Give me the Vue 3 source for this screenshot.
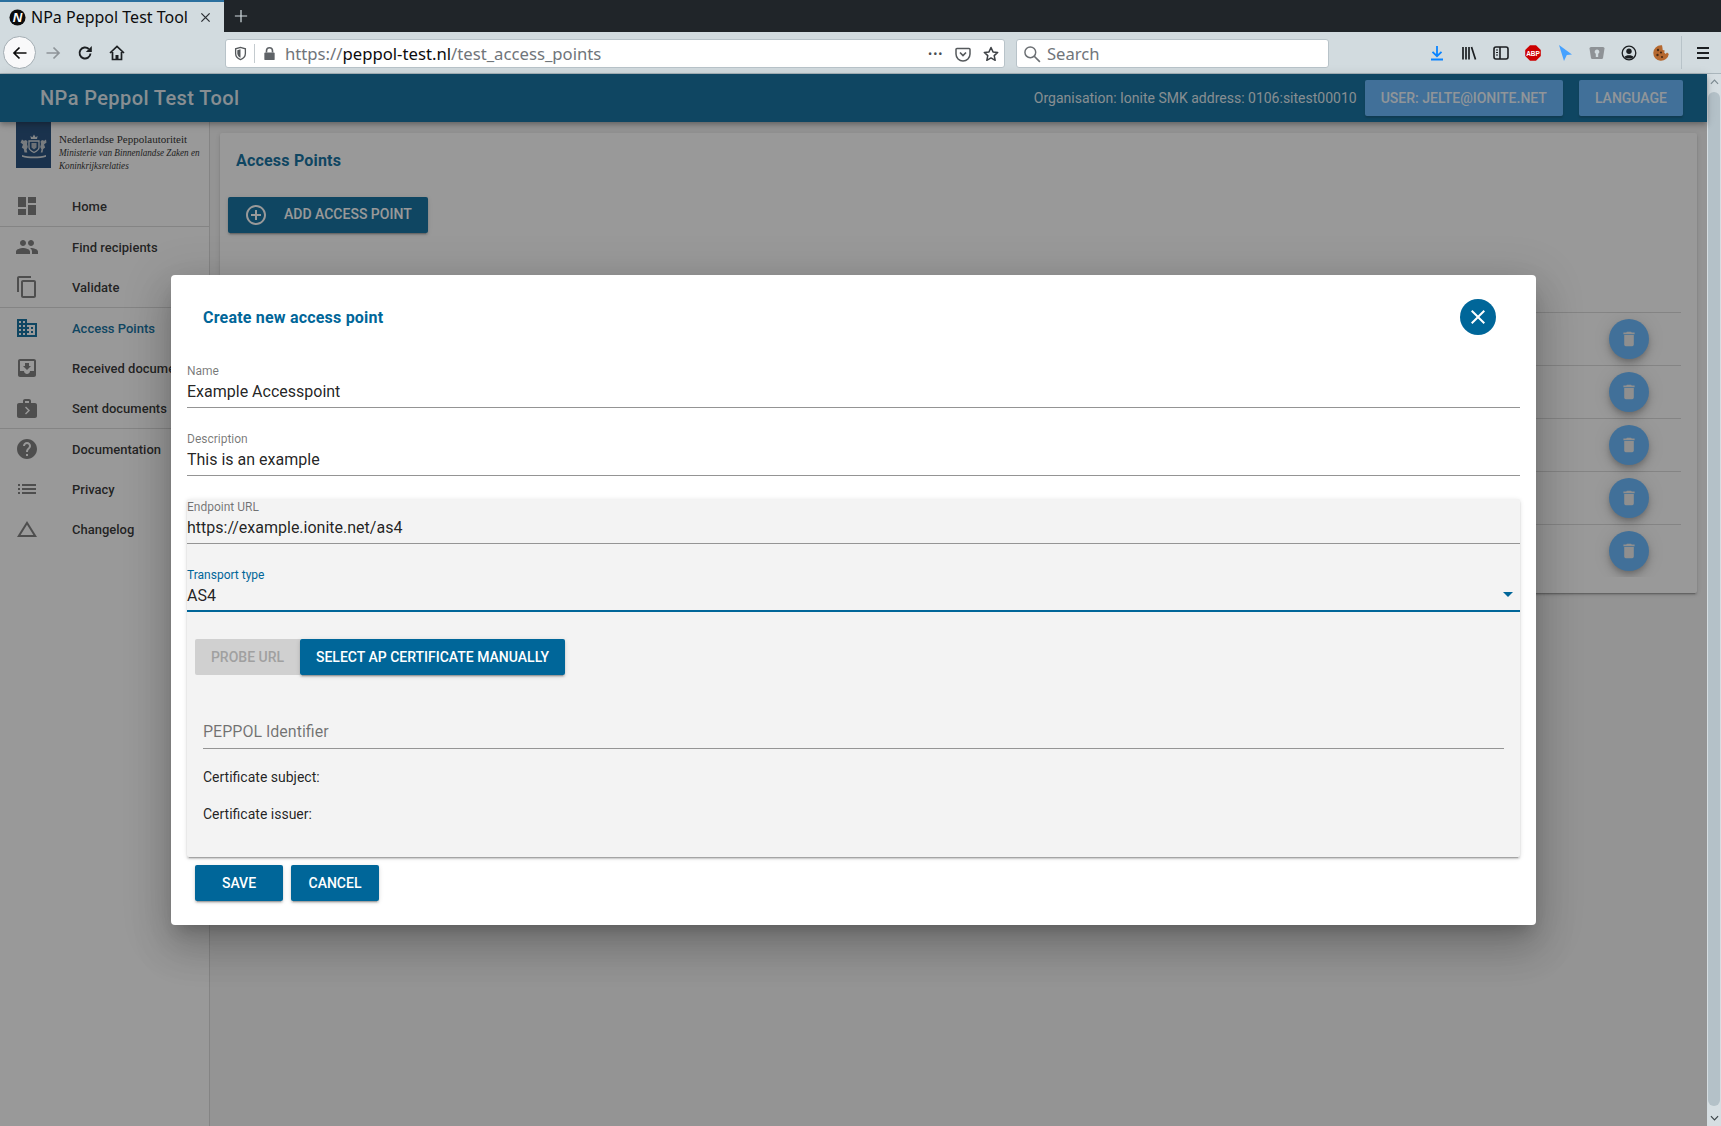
<script setup>
const P = {
  dashboard: 'M3 13h8V3H3v10zm0 8h8v-6H3v6zm10 0h8V11h-8v10zm0-18v6h8V3h-8z',
  people: 'M16 11c1.66 0 2.99-1.34 2.99-3S17.66 5 16 5c-1.66 0-3 1.34-3 3s1.34 3 3 3zm-8 0c1.66 0 2.99-1.34 2.99-3S9.66 5 8 5C6.34 5 5 6.34 5 8s1.34 3 3 3zm0 2c-2.33 0-7 1.17-7 3.5V19h14v-2.5c0-2.33-4.67-3.5-7-3.5zm8 0c-.29 0-.62.02-.97.05 1.16.84 1.97 1.97 1.97 3.45V19h6v-2.5c0-2.33-4.67-3.5-7-3.5z',
  copy: 'M16 1H4c-1.1 0-2 .9-2 2v14h2V3h12V1zm3 4H8c-1.1 0-2 .9-2 2v14c0 1.1.9 2 2 2h11c1.1 0 2-.9 2-2V7c0-1.1-.9-2-2-2zm0 16H8V7h11v14z',
  domain: 'M12 7V3H2v18h20V7H12zM6 19H4v-2h2v2zm0-4H4v-2h2v2zm0-4H4V9h2v2zm0-4H4V5h2v2zm4 12H8v-2h2v2zm0-4H8v-2h2v2zm0-4H8V9h2v2zm0-4H8V5h2v2zm10 12h-8v-2h2v-2h-2v-2h2v-2h-2V9h8v10zm-2-8h-2v2h2v-2zm0 4h-2v2h2v-2z',
  inbox: 'M19 3H4.99c-1.11 0-1.98.89-1.98 2L3 19c0 1.1.88 2 1.99 2H19c1.1 0 2-.9 2-2V5c0-1.11-.9-2-2-2zm0 12h-4c0 1.66-1.35 3-3 3s-3-1.34-3-3H4.99V5H19v10zm-3-5h-2V7h-4v3H8l4 4 4-4z',
  nextWeek: 'M20 7h-4V5c0-.55-.22-1.05-.59-1.41C15.05 3.22 14.55 3 14 3h-4c-1.1 0-2 .9-2 2v2H4c-1.1 0-2 .9-2 2v11c0 1.1.9 2 2 2h16c1.1 0 2-.9 2-2V9c0-1.1-.9-2-2-2zM10 5h4v2h-4V5zm1 13.5l-1-1 3-3-3-3 1-1 4 4-4 4z',
  help: 'M12 2C6.48 2 2 6.48 2 12s4.48 10 10 10 10-4.48 10-10S17.52 2 12 2zm1 17h-2v-2h2v2zm2.07-7.75l-.9.92C13.45 12.9 13 13.5 13 15h-2v-.5c0-1.1.45-2.1 1.17-2.83l1.24-1.26c.37-.36.59-.86.59-1.41 0-1.1-.9-2-2-2s-2 .9-2 2H8c0-2.21 1.79-4 4-4s4 1.79 4 4c0 .88-.36 1.68-.93 2.25z',
  list: 'M3 13h2v-2H3v2zm0 4h2v-2H3v2zm0-8h2V7H3v2zm4 4h14v-2H7v2zm0 4h14v-2H7v2zM7 7v2h14V7H7z',
  change: 'M12 7.77L18.39 18H5.61L12 7.77M12 4L2 20h20L12 4z',
  del: 'M6 19c0 1.1.9 2 2 2h8c1.1 0 2-.9 2-2V7H6v12zM19 4h-3.5l-1-1h-5l-1 1H5v2h14V4z',
  close: 'M19 6.41L17.59 5 12 10.59 6.41 5 5 6.41 10.59 12 5 17.59 6.41 19 12 13.41 17.59 19 19 17.59 13.41 12z',
  add: 'M13 7h-2v4H7v2h4v4h2v-4h4v-2h-4V7zm-1-5C6.48 2 2 6.48 2 12s4.48 10 10 10 10-4.48 10-10S17.52 2 12 2zm0 18c-4.41 0-8-3.59-8-8s3.59-8 8-8 8 3.59 8 8-3.59 8-8 8z',
}
const groups = [
  [{ label: 'Home', icon: P.dashboard }],
  [{ label: 'Find recipients', icon: P.people }, { label: 'Validate', icon: P.copy }],
  [{ label: 'Access Points', icon: P.domain, active: true }, { label: 'Received documents', icon: P.inbox }, { label: 'Sent documents', icon: P.nextWeek }],
  [{ label: 'Documentation', icon: P.help }, { label: 'Privacy', icon: P.list }, { label: 'Changelog', icon: P.change }],
]
const rows = [1, 2, 3, 4, 5]
</script>

<template>
  <div class="root">
    <div class="tabbar">
      <div class="tab">
        <svg class="favicon" viewBox="0 0 18 18"><circle cx="9" cy="9" r="8.5" fill="#0c0c0d"/><text x="9" y="14" text-anchor="middle" class="favtext">N</text></svg>
        <span class="tabtitle">NPa Peppol Test Tool</span>
        <svg class="tabclose" viewBox="0 0 12 12"><path d="M1.5 1.5l9 9M10.5 1.5l-9 9" stroke="#2a2e32" stroke-width="1.4" fill="none"/></svg>
      </div>
      <svg class="newtab" viewBox="0 0 16 16"><path d="M8 1v14M1 8h14" stroke="#d2dbdf" stroke-width="1.4" fill="none"/></svg>
    </div>

    <div class="toolbar">
      <div class="backbtn">
        <svg class="ff" viewBox="0 0 16 16"><path d="M14.5 8H2.5M7.5 2.5L2 8l5.5 5.5" stroke="#0c0c0d" stroke-width="1.7" fill="none"/></svg>
      </div>
      <svg class="ff forward" viewBox="0 0 16 16"><path d="M1.5 8h12M8.5 2.5L14 8l-5.5 5.5" stroke="#8e9499" stroke-width="1.7" fill="none"/></svg>
      <svg class="ff reload" viewBox="0 0 16 16"><path d="M13.5 8.500A5.500 5.500 0 1 1 11.800 4" stroke="#1c1f22" stroke-width="1.9" fill="none"/><path d="M14.800 1v6h-6z" fill="#1c1f22"/></svg>
      <svg class="ff home" viewBox="0 0 16 16"><path d="M1 8l7-6.500L15 8M3.500 7v7.500h9V7" stroke="#1c1f22" stroke-width="1.7" fill="none"/><path d="M6.500 10h3v4.500h-3z" fill="#1c1f22"/></svg>

      <div class="urlbar">
        <svg class="shield" viewBox="0 0 16 16"><path d="M8 1.500L2.800 3v5c0 3.300 2.400 5.500 5.200 6.500 2.800-1 5.200-3.200 5.200-6.500V3z" stroke="#55595c" stroke-width="1.4" fill="none"/><path d="M8 3.500v9C6 11.600 4.600 10 4.600 8V4.400z" fill="#55595c"/></svg>
        <span class="urlsep"></span>
        <svg class="lock" viewBox="0 0 16 16"><path d="M4.800 7V5a3.200 3.200 0 0 1 6.400 0v2" stroke="#5f6367" stroke-width="1.7" fill="none"/><rect x="2.500" y="7" width="11" height="8" rx="1" fill="#5f6367"/></svg>
        <span class="urltext"><span class="dim">https://</span><span class="host">peppol-test.nl</span><span class="dim">/test_access_points</span></span>
        <span class="dots">•••</span>
        <svg class="ff pocket" viewBox="0 0 16 16"><path d="M2 2.500h12a1 1 0 0 1 1 1V8a7 7 0 0 1-14 0V3.500a1 1 0 0 1 1-1z" stroke="#55595c" stroke-width="1.5" fill="none"/><path d="M5 6.500l3 3 3-3" stroke="#55595c" stroke-width="1.7" fill="none"/></svg>
        <svg class="ff star" viewBox="0 0 16 16"><path d="M8 1.500l2 4.400 4.700.5-3.500 3.200 1 4.700L8 11.900l-4.200 2.400 1-4.700L1.300 6.400 6 5.900z" stroke="#3d4145" stroke-width="1.5" fill="none" stroke-linejoin="round"/></svg>
      </div>

      <div class="searchbar">
        <svg class="mag" viewBox="0 0 16 16"><circle cx="6.500" cy="6.500" r="4.800" stroke="#6b6f73" stroke-width="1.3" fill="none"/><path d="M10 10l5 5" stroke="#6b6f73" stroke-width="1.5"/></svg>
        <span class="searchtext">Search</span>
      </div>

      <div class="tools">
        <svg class="ff tool" viewBox="0 0 16 16"><path d="M8 1v10M3.500 6.800L8 11.200l4.500-4.400M2 14.500h12" stroke="#0a84ff" stroke-width="1.8" fill="none"/></svg>
        <svg class="ff tool" viewBox="0 0 16 16"><path d="M2 2v12.500M5 2v12.500M8 2v12.500M10.500 2l4 12.500" stroke="#1c1f22" stroke-width="1.7" fill="none"/></svg>
        <svg class="ff tool" viewBox="0 0 16 16"><rect x="1" y="2" width="14" height="12" rx="2" stroke="#1c1f22" stroke-width="1.6" fill="none"/><path d="M7 2v12" stroke="#1c1f22" stroke-width="1.6"/><path d="M3 5h2M3 7.500h2M3 10h2" stroke="#1c1f22" stroke-width="1"/></svg>
        <svg class="ff tool" viewBox="0 0 16 16"><path d="M5 .2h6L15.800 5v6L11 15.800H5L.2 11V5z" fill="#cc0000"/><text x="8" y="10.700" text-anchor="middle" class="abp">ABP</text></svg>
        <svg class="ff tool" viewBox="0 0 16 16"><path d="M2 0L15 9.500 9.800 10 7 16z" fill="#45a1ff"/></svg>
        <svg class="ff tool" viewBox="0 0 16 16"><path d="M.5 3.500C.5 2.500 1.500 2 2.500 2h11c1 0 2 .5 2 1.500L14 13c-.2.800-.8 1-1.500 1h-9c-.7 0-1.300-.2-1.500-1z" fill="#8e9296"/><path d="M8 4.500a2.300 2.300 0 0 0-1.200 4.300V12h2.400V8.800A2.300 2.300 0 0 0 8 4.500z" fill="#d2dbdf"/></svg>
        <svg class="ff tool" viewBox="0 0 16 16"><circle cx="8" cy="8" r="6.800" stroke="#1c1f22" stroke-width="1.3" fill="none"/><circle cx="8" cy="6.300" r="2.700" fill="#1c1f22"/><path d="M3.500 12c1-2.300 8-2.300 9 0-2 2-7 2-9 0z" fill="#1c1f22"/></svg>
        <svg class="ff tool" viewBox="0 0 16 16"><path d="M8 .2a7.800 7.800 0 1 0 7.800 8.800l-1.800-1.500-1.300 1.500-1.500-1.500.5-2-2-.5-.2-2L9 .3z" fill="#b5682f"/><circle cx="5" cy="5" r="1.200" fill="#4a2a14"/><circle cx="8" cy="7.500" r="1.100" fill="#4a2a14"/><circle cx="4.500" cy="10" r="1.200" fill="#4a2a14"/><circle cx="9" cy="12" r="1.100" fill="#4a2a14"/></svg>
        <span class="toolsep"></span>
        <svg class="ff burger" viewBox="0 0 16 16"><path d="M2 3h12M2 8h12M2 13h12" stroke="#1c1f22" stroke-width="1.8"/></svg>
      </div>
    </div>

    <div class="viewport">
      <div class="page">
        <header class="appbar">
          <div class="apptitle">NPa Peppol Test Tool</div>
          <div class="apporg">Organisation: Ionite SMK address: 0106:sitest00010</div>
          <button class="lightbtn userbtn">USER: JELTE@IONITE.NET</button>
          <button class="lightbtn">LANGUAGE</button>
        </header>

        <div class="body">
          <aside class="sidebar">
            <div class="brand">
              <div class="crest">
                <svg viewBox="0 0 32 28" class="crestsvg">
                  <path d="M13 7l-.6-3 2 1.200L16 2.500l1.600 2.700 2-1.200L19 7z" fill="#d5dade"/>
                  <path d="M11 9h10v6.500c0 2.500-3 4-5 5-2-1-5-2.500-5-5z" fill="none" stroke="#d5dade" stroke-width="1.300"/>
                  <path d="M13.500 11h5v4.500l-2.500 2-2.500-2z" fill="#aeb6be"/>
                  <path d="M4 7.500l1.800 1.200L8 8l1.500 1.500L9 12l.8 3-1.300 2.500.8 3H6.500L5.800 17 3.800 15.500 5 12.500 2.500 10.500z" fill="#c3c9cf"/>
                  <path d="M28 7.500l-1.800 1.200L24 8l-1.500 1.500L23 12l-.8 3 1.300 2.500-.8 3h1.800l.7-3.500 2-1.500-1.200-3 2.500-2z" fill="#c3c9cf"/>
                  <path d="M4 23c6 2 18 2 24 0v1.800c-6 2-18 2-24 0z" fill="#d5dade"/>
                </svg>
              </div>
              <div class="brandtext">
                <div class="brandname">Nederlandse Peppolautoriteit</div>
                <div class="brandsub first">Ministerie van Binnenlandse Zaken en</div>
                <div class="brandsub">Koninkrijksrelaties</div>
              </div>
            </div>
            <nav class="nav">
              <div v-for="(g, gi) in groups" :key="gi" class="navgroup">
                <div v-for="item in g" :key="item.label" class="navitem" :class="{ active: item.active }">
                  <svg class="navicon" viewBox="0 0 24 24"><path :d="item.icon"/></svg>
                  <span class="navlabel">{{ item.label }}</span>
                </div>
              </div>
            </nav>
          </aside>

          <main class="content">
            <section class="card">
              <h2 class="cardtitle">Access Points</h2>
              <button class="primary addbtn">
                <svg class="addicon" viewBox="0 0 24 24"><path :d="P.add"/></svg>
                <span class="addlabel">ADD ACCESS POINT</span>
              </button>
              <div class="table">
                <div v-for="r in rows" :key="r" class="row">
                  <button class="fab"><svg viewBox="0 0 24 24"><path :d="P.del"/></svg></button>
                </div>
              </div>
            </section>
          </main>
        </div>

        <div class="scrim">
          <div class="modal">
            <div class="modalhead">
              <h3 class="modaltitle">Create new access point</h3>
              <button class="closebtn"><svg viewBox="0 0 24 24"><path :d="P.close"/></svg></button>
            </div>

            <div class="field">
              <div class="flabel">Name</div>
              <div class="fvalue">Example Accesspoint</div>
            </div>
            <div class="field">
              <div class="flabel">Description</div>
              <div class="fvalue">This is an example</div>
            </div>

            <div class="panel">
              <div class="field first">
                <div class="flabel">Endpoint URL</div>
                <div class="fvalue">https://example.ionite.net/as4</div>
              </div>
              <div class="field focused">
                <div class="flabel">Transport type</div>
                <div class="fvalue">AS4</div>
                <span class="caret"></span>
              </div>
              <div class="btnrow">
                <button class="probe">PROBE URL</button>
                <button class="primary select">SELECT AP CERTIFICATE MANUALLY</button>
              </div>
              <div class="idfield">PEPPOL Identifier</div>
              <div class="cert subject">Certificate subject:</div>
              <div class="cert issuer">Certificate issuer:</div>
            </div>

            <div class="actions">
              <button class="primary act">SAVE</button>
              <button class="primary act">CANCEL</button>
            </div>
          </div>
        </div>
      </div>

      <div class="scrollbar">
        <svg class="chev" viewBox="0 0 10 6"><path d="M1 5l4-4 4 4" stroke="#7d8a91" stroke-width="1.3" fill="none"/></svg>
        <div class="thumb"></div>
        <svg class="chev" viewBox="0 0 10 6"><path d="M1 1l4 4 4-4" stroke="#3c4448" stroke-width="1.3" fill="none"/></svg>
      </div>
    </div>
  </div>
</template>

<style>
html, body { margin: 0; padding: 0; overflow: hidden; }
</style>

<style scoped>
.root { width: 1721px; height: 1126px; display: flex; flex-direction: column; overflow: hidden; font-family: Roboto, "Liberation Sans", sans-serif; }
button { font-family: inherit; border: 0; padding: 0; margin: 0; cursor: default; }
h2, h3 { margin: 0; }

.tabbar { height: 32px; background: #202529; display: flex; align-items: center; flex: none; }
.tab { width: 224px; height: 32px; box-sizing: border-box; background: #d2dbdf; border-top: 2px solid #2a6f9e; display: flex; align-items: center; padding: 0 0 0 9px; font-family: "Noto Sans", sans-serif; }
.favicon { width: 17px; height: 17px; flex: none; }
.favtext { font: italic 700 14px "Liberation Sans", sans-serif; fill: #fff; }
.tabtitle { margin-left: 5px; font-size: 16px; color: #0c0c0d; white-space: nowrap; width: 169px; }
.tabclose { width: 11px; height: 11px; flex: none; }
.newtab { width: 14px; height: 14px; margin-left: 10px; }

.toolbar { height: 41px; flex: none; background: #d2dbdf; border-bottom: 1px solid #aab6bc; display: flex; align-items: center; position: relative; padding-left: 3px; font-family: "Noto Sans", sans-serif; }
.ff { width: 16px; height: 16px; flex: none; display: block; }
.backbtn { width: 33px; height: 33px; border-radius: 50%; box-sizing: border-box; background: #f9f9fa; border: 1px solid #a3adb3; display: flex; align-items: center; justify-content: center; flex: none; }
.forward { margin-left: 9px; }
.reload { margin-left: 16px; }
.home { margin-left: 16px; }
.urlbar { margin: 2px 0 0 100px; width: 780px; height: 29px; box-sizing: border-box; background: #fff; border: 1px solid #b8c3c9; border-radius: 3px; display: flex; align-items: center; padding-left: 7px; }
.shield { width: 15px; height: 15px; flex: none; }
.urlsep { width: 1px; height: 19px; background: #c4cbcf; margin: 0 7px 0 6px; }
.lock { width: 15px; height: 15px; flex: none; }
.urltext { margin-left: 8px; font-size: 16.7px; white-space: nowrap; flex: 1; }
.dim { color: #70757a; }
.host { color: #0c0c0d; }
.dots { font-size: 11px; color: #4a4e52; letter-spacing: 1px; width: 20px; box-sizing: border-box; padding-left: 2px; white-space: nowrap; }
.pocket { margin-left: 9px; }
.star { margin-left: 12px; margin-right: 5px; }
.searchbar { margin: 2px 0 0 11px; width: 313px; height: 29px; box-sizing: border-box; background: #fff; border: 1px solid #b8c3c9; border-radius: 3px; display: flex; align-items: center; padding-left: 6px; }
.mag { width: 18px; height: 18px; flex: none; }
.searchtext { margin-left: 6px; font-size: 16.6px; color: #70757a; }
.tools { display: flex; align-items: center; margin-left: 100px; }
.tool { margin-right: 16px; }
.toolsep { width: 1px; height: 33px; background: #b8c3c9; margin-left: -4px; }
.burger { margin-left: 13px; }
.abp { font: 700 6.5px "Liberation Sans", sans-serif; fill: #fff; }

.viewport { flex: 1; display: flex; min-height: 0; }
.page { width: 1707px; flex: none; position: relative; display: flex; flex-direction: column; background: #f5f5f5; }
.scrollbar { width: 14px; flex: none; background: #d6dee2; display: flex; flex-direction: column; align-items: center; }
.chev { width: 9px; height: 6px; margin: 5px 0; flex: none; }
.thumb { flex: 1; width: 12px; border-radius: 6px; background: #b4c1c8; margin: 2px 0 4px; }

.appbar { height: 48px; flex: none; background: #006699; display: flex; align-items: center; padding: 0 24px 0 40px; position: relative; z-index: 2; box-shadow: 0 2px 4px -1px rgba(0,0,0,.2), 0 4px 5px rgba(0,0,0,.14), 0 1px 10px rgba(0,0,0,.12); color: rgba(255,255,255,.88); }
.apptitle { font-size: 20px; font-weight: 500; letter-spacing: .4px; flex: 1; white-space: nowrap; }
.apporg { font-size: 14px; margin-right: 8px; white-space: nowrap; }
.lightbtn { height: 36px; padding: 0 16px; font-size: 14px; font-weight: 500; color: rgba(255,255,255,.92); background: #5db4ff; border-radius: 2px; white-space: nowrap; box-shadow: 0 2px 2px rgba(0,0,0,.2); }
.userbtn { margin-right: 16px; }

.body { flex: 1; display: flex; min-height: 0; }
.sidebar { width: 210px; flex: none; box-sizing: border-box; background: #fff; border-right: 1px solid #d8d8d8; }
.brand { height: 64px; display: flex; align-items: flex-start; }
.crest { width: 35px; height: 46px; margin-left: 16px; background: #154273; flex: none; display: flex; align-items: flex-start; justify-content: center; }
.crestsvg { width: 32px; height: 28px; margin-top: 10px; }
.brandtext { margin-left: 8px; margin-top: 11px; font-family: "Liberation Serif", serif; color: #222; white-space: nowrap; }
.brandname { font-size: 11px; line-height: 13px; }
.brandsub { font-size: 10.5px; font-style: italic; line-height: 12.5px; transform: scaleX(.87); transform-origin: left center; }
.brandsub.first { margin-top: 1px; }
.nav { display: flex; flex-direction: column; }
.navgroup { border-bottom: 1px solid #d8d8d8; }
.navgroup:last-child { border-bottom: 0; }
.navitem { height: 40px; display: flex; align-items: center; padding-left: 15px; color: rgba(0,0,0,.87); white-space: nowrap; }
.navicon { width: 24px; height: 24px; fill: rgba(0,0,0,.54); flex: none; }
.navlabel { margin-left: 33px; font-size: 13px; font-weight: 500; }
.navitem.active { color: #006699; }
.navitem.active .navicon { fill: #006699; }

.content { flex: 1; min-width: 0; padding: 11px 10px 0; }
.card { height: 460px; box-sizing: border-box; background: #fff; padding: 17px 16px 16px 8px; border-radius: 2px; box-shadow: 0 3px 1px -2px rgba(0,0,0,.2), 0 2px 2px rgba(0,0,0,.14), 0 1px 5px rgba(0,0,0,.12); }
.cardtitle { font-size: 16px; font-weight: 700; line-height: 22px; letter-spacing: .2px; color: #006699; margin-left: 8px; }
.primary { background: #006699; color: #fff; font-size: 14px; font-weight: 500; border-radius: 2px; box-shadow: 0 3px 1px -2px rgba(0,0,0,.2), 0 2px 2px rgba(0,0,0,.14), 0 1px 5px rgba(0,0,0,.12); white-space: nowrap; }
.addbtn { width: 200px; height: 36px; margin-top: 25px; display: flex; align-items: center; padding-left: 16px; box-sizing: border-box; }
.addicon { width: 24px; height: 24px; fill: #fff; margin-right: 16px; flex: none; }
.addlabel { margin-bottom: 2px; }
.table { margin-top: 79px; height: 265px; overflow: hidden; }
.row { height: 53px; box-sizing: border-box; border-top: 1px solid #d8d8d8; display: flex; align-items: center; justify-content: flex-end; padding-right: 32px; }
.fab { width: 40px; height: 40px; border-radius: 50%; background: #5db4ff; display: flex; align-items: center; justify-content: center; box-shadow: 0 3px 5px -1px rgba(0,0,0,.2), 0 6px 10px rgba(0,0,0,.14), 0 1px 18px rgba(0,0,0,.12); }
.fab svg { width: 24px; height: 24px; fill: #ececec; transform: scale(.8); }

.scrim { position: absolute; inset: 0; z-index: 5; background: rgba(33,33,33,.46); display: flex; align-items: center; justify-content: center; }
.modal { width: 1365px; height: 650px; box-sizing: border-box; background: #fff; border-radius: 4px; padding: 0 16px; box-shadow: 0 11px 15px -7px rgba(0,0,0,.2), 0 24px 38px 3px rgba(0,0,0,.14), 0 9px 46px 8px rgba(0,0,0,.12); }
.modalhead { height: 86px; box-sizing: border-box; padding: 0 24px 2px 16px; display: flex; align-items: center; justify-content: space-between; }
.modaltitle { font-size: 16px; font-weight: 700; letter-spacing: .2px; color: #006699; }
.closebtn { width: 36px; height: 36px; border-radius: 50%; background: #006699; display: flex; align-items: center; justify-content: center; }
.closebtn svg { width: 24px; height: 24px; fill: #fff; }

.field { height: 47px; box-sizing: border-box; padding-top: 1px; border-bottom: 1px solid #949494; margin-bottom: 21px; position: relative; }
.flabel { font-size: 12px; line-height: 18px; color: rgba(0,0,0,.54); }
.fvalue { font-size: 16px; line-height: 24px; color: rgba(0,0,0,.87); }
.panel { height: 358px; background: #f3f3f3; box-shadow: 0 3px 1px -2px rgba(0,0,0,.2), 0 2px 2px rgba(0,0,0,.14), 0 1px 5px rgba(0,0,0,.12); border-radius: 2px; margin-top: 23px; }
.field.first { top: -2px; margin-bottom: 19px; }
.field.focused { border-bottom: 2px solid #006699; margin-bottom: 27px; }
.field.focused .flabel { color: #006699; }
.caret { position: absolute; right: 7px; bottom: 13px; width: 0; height: 0; border: 5px solid transparent; border-top-color: #006699; border-bottom: 0; }
.btnrow { display: flex; padding-left: 8px; }
.btnrow button { height: 36px; }
.probe { width: 105px; background: #d0d0d0; color: #a0a0a0; font-size: 14px; font-weight: 500; border-radius: 2px 0 0 2px; }
.select { width: 265px; }
.idfield { margin: 27px 16px 0; height: 47px; box-sizing: border-box; border-bottom: 1px solid #949494; font-size: 16px; line-height: 24px; padding-top: 18px; color: rgba(0,0,0,.54); }
.cert { margin: 0 16px; font-size: 14px; line-height: 20px; color: rgba(0,0,0,.87); }
.subject { margin-top: 18px; }
.issuer { margin-top: 17px; }
.actions { display: flex; gap: 8px; padding: 8px 0 0 8px; }
.act { width: 88px; height: 36px; }
</style>
